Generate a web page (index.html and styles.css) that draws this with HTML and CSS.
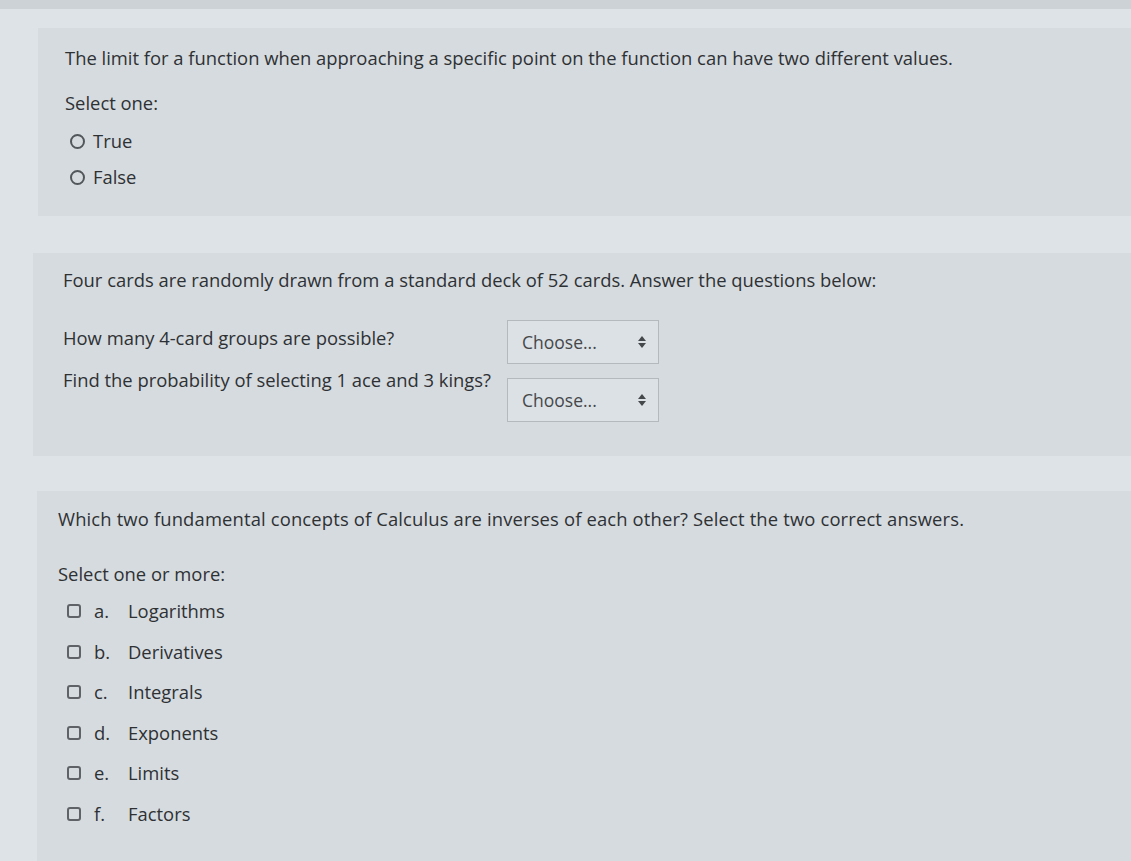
FILE: index.html
```html
<!DOCTYPE html>
<html lang="en">
<head>
  <meta charset="UTF-8">
  <title>Quiz</title>
  <link rel="stylesheet" href="styles.css">
</head>
<body>
  <div class="topbar"></div>

  <div class="que que-1">
    <p class="qtext">The limit for a function when approaching a specific point on the function can have two different values.</p>
    <p class="prompt">Select one:</p>
    <div class="answer">
      <label class="opt"><span class="radio"></span>True</label>
      <label class="opt"><span class="radio"></span>False</label>
    </div>
  </div>

  <div class="que que-2">
    <p class="qtext">Four cards are randomly drawn from a standard deck of 52 cards. Answer the questions below:</p>
    <div class="match">
      <span class="match-label">How many 4-card groups are possible?</span>
      <div class="select"><span>Choose...</span><span class="arrows"></span></div>
      <span class="match-label second">Find the probability of selecting 1 ace and 3 kings?</span>
      <div class="select"><span>Choose...</span><span class="arrows"></span></div>
    </div>
  </div>

  <div class="que que-3">
    <p class="qtext">Which two fundamental concepts of Calculus are inverses of each other? Select the two correct answers.</p>
    <p class="prompt">Select one or more:</p>
    <div class="answer multi">
      <label class="chk"><span class="box"></span><span class="letter">a.</span>Logarithms</label>
      <label class="chk"><span class="box"></span><span class="letter">b.</span>Derivatives</label>
      <label class="chk"><span class="box"></span><span class="letter">c.</span>Integrals</label>
      <label class="chk"><span class="box"></span><span class="letter">d.</span>Exponents</label>
      <label class="chk"><span class="box"></span><span class="letter">e.</span>Limits</label>
      <label class="chk"><span class="box"></span><span class="letter">f.</span>Factors</label>
    </div>
  </div>
</body>
</html>
```

FILE: styles.css
```css
*{
  padding: 0;
  margin: 0;
  box-sizing: border-box;
}
body{
  background: #dee3e7;
  font-family: "Open Sans", "Liberation Sans", sans-serif;
  font-size: 18.4px;
  line-height: 26px;
  color: #2e3134;
  height: 861px;
  overflow: hidden;
}
.topbar{
  height: 9px;
  background: #cdd2d6;
}
.que{
  background: #d6dbdf;
}
.que-1{
  margin: 19px 0 0 38px;
  padding: 17px 0 26px 27px;
}
.que-2{
  margin: 37px 0 0 33px;
  padding: 14px 0 34px 30px;
}
.que-3{
  margin: 35px 0 0 37px;
  padding: 15px 0 40px 21px;
}
.que-3 .qtext{
  letter-spacing: 0.15px;
}
.prompt{
  margin-top: 19px;
}
.que-3 .prompt{
  margin-top: 29px;
}
.answer{
  display: flex;
  flex-direction: column;
  gap: 10px;
  margin-top: 12px;
  padding-left: 5px;
}
.opt{
  display: flex;
  align-items: center;
  gap: 8px;
}
.radio{
  width: 15px;
  height: 15px;
  border: 2px solid #52575b;
  border-radius: 50%;
}
.match{
  display: grid;
  grid-template-columns: 444px 152px;
  row-gap: 14px;
  margin-top: 27px;
}
.match-label{
  padding-top: 5px;
}
.match-label.second{
  padding-top: 0;
  margin-top: -11px;
}
.select{
  height: 44px;
  border: 1px solid #b4b9bd;
  background: #dce1e5;
  display: flex;
  align-items: center;
  justify-content: space-between;
  padding: 0 12px 0 14px;
  font-size: 17.5px;
  color: #45484b;
}
.arrows{
  width: 8px;
  height: 12px;
  position: relative;
}
.arrows::before,
.arrows::after{
  content: "";
  position: absolute;
  left: 0;
  border-left: 4px solid transparent;
  border-right: 4px solid transparent;
}
.arrows::before{
  top: 0;
  border-bottom: 5px solid #45484b;
}
.arrows::after{
  bottom: 0;
  border-top: 5px solid #45484b;
}
.multi{
  gap: 14.5px;
  margin-top: 11px;
  padding-left: 9px;
}
.chk{
  display: flex;
  align-items: center;
}
.box{
  width: 14px;
  height: 14px;
  border: 2px solid #5f6367;
  border-radius: 3px;
  margin-right: 13px;
}
.letter{
  width: 34px;
}
```
